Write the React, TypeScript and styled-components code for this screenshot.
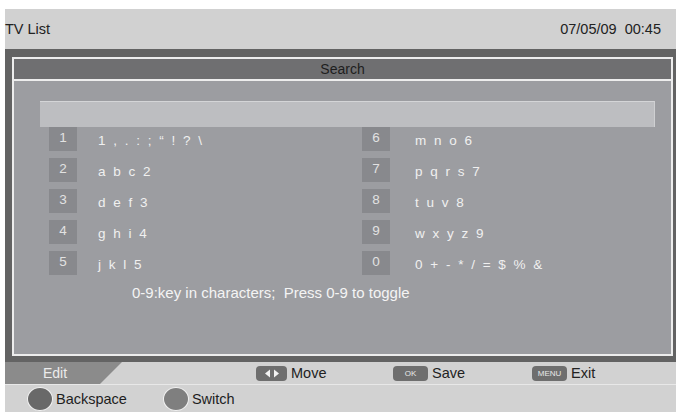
import * as React from "react";
import styled, { createGlobalStyle } from "styled-components";

type KeyGroup = {
  key: string;
  chars: string;
};

const leftKeys: Array<KeyGroup> = [
  { key: "1", chars: "1 , . : ; \u201C ! ? \\" },
  { key: "2", chars: "a b c 2" },
  { key: "3", chars: "d e f 3" },
  { key: "4", chars: "g h i 4" },
  { key: "5", chars: "j k l 5" },
];

const rightKeys: Array<KeyGroup> = [
  { key: "6", chars: "m n o 6" },
  { key: "7", chars: "p q r s 7" },
  { key: "8", chars: "t u v 8" },
  { key: "9", chars: "w x y z 9" },
  { key: "0", chars: "0 + - * / = $ % &" },
];

function MoveArrows() {
  return (
    <svg width="16" height="9" viewBox="0 0 16 9">
      <polygon points="6,0.5 6,8.5 1,4.5" fill="#f2f2f2" />
      <polygon points="10,0.5 10,8.5 15,4.5" fill="#f2f2f2" />
    </svg>
  );
}

function App() {
  const renderKeyRow = (indent: number) => (group: KeyGroup) => {
    return (
      <KeyRow key={group.key}>
        <KeyNumber>{group.key}</KeyNumber>
        <KeyChars $indent={indent}>{group.chars}</KeyChars>
      </KeyRow>
    );
  };

  return (
    <>
      <GlobalStyle />
      <Screen>
        <TopBar>
          <span>TV List</span>
          <span>07/05/09&nbsp;&nbsp;00:45</span>
        </TopBar>
        <Frame>
          <Panel>
            <PanelHeader>Search</PanelHeader>
            <PanelBody>
              <SearchInput />
              <KeyGrid>
                <KeyColumn>{leftKeys.map(renderKeyRow(21))}</KeyColumn>
                <KeyColumn>{rightKeys.map(renderKeyRow(25))}</KeyColumn>
              </KeyGrid>
              <HelpText>0-9:key in characters;&nbsp;&nbsp;Press 0-9 to toggle</HelpText>
            </PanelBody>
          </Panel>
        </Frame>
        <ActionBar>
          <EditTab>Edit</EditTab>
          <Hint>
            <KeyBadge $width={31}>
              <MoveArrows />
            </KeyBadge>
            Move
          </Hint>
          <Hint>
            <KeyBadge $width={35}>OK</KeyBadge>
            Save
          </Hint>
          <Hint>
            <KeyBadge $width={35}>MENU</KeyBadge>
            Exit
          </Hint>
        </ActionBar>
        <ColorBar>
          <ColorHint>
            <ColorDot $color="#696969" />
            Backspace
          </ColorHint>
          <ColorHint>
            <ColorDot $color="#7f7f7f" />
            Switch
          </ColorHint>
        </ColorBar>
      </Screen>
    </>
  );
}

export default App;

const GlobalStyle = createGlobalStyle`
  body {
    margin: 0;
    background: #ffffff;
    font-family: "Liberation Sans", Arial, sans-serif;
  }
`;

const Screen = styled.div`
  display: flex;
  flex-direction: column;
  width: 671px;
  margin: 9px 0 0 5px;
`;

const TopBar = styled.header`
  display: flex;
  flex-direction: row;
  justify-content: space-between;
  align-items: center;
  height: 40px;
  padding: 0 15px 1px 0;
  background-color: #d1d1d1;
  color: #222;
  font-size: 14.5px;
  box-sizing: border-box;
`;

const Frame = styled.div`
  display: flex;
  height: 313px;
  padding: 8px 3px 6px 7px;
  background-color: #636363;
  box-sizing: border-box;
`;

const Panel = styled.section`
  display: flex;
  flex-direction: column;
  flex: 1;
  border: 2px solid #ededed;
`;

const PanelHeader = styled.div`
  display: flex;
  justify-content: center;
  align-items: center;
  height: 20px;
  background-color: #6f6f71;
  border-bottom: 2px solid #ededed;
  color: #1e1e1e;
  font-size: 14px;
`;

const PanelBody = styled.div`
  display: flex;
  flex-direction: column;
  flex: 1;
  padding: 20px 16px 0 26px;
  background-color: #9c9da1;
`;

const SearchInput = styled.div`
  height: 26px;
  background-color: #bdbec1;
  border-top: 1px solid #d4d5d7;
  border-right: 1px solid #cfd0d2;
  box-sizing: border-box;
`;

const KeyGrid = styled.div`
  display: grid;
  grid-template-columns: 313px 1fr;
  padding-left: 9px;
`;

const KeyColumn = styled.div`
  display: flex;
  flex-direction: column;
`;

const KeyRow = styled.div`
  display: flex;
  flex-direction: row;
  align-items: flex-start;
  height: 31px;
`;

const KeyNumber = styled.div`
  width: 28px;
  height: 24px;
  padding-top: 3px;
  box-sizing: border-box;
  background-color: #88898d;
  color: #e2e2e2;
  font-size: 13.5px;
  text-align: center;
`;

const KeyChars = styled.div<{ $indent: number }>`
  margin: 6px 0 0 ${(props) => props.$indent}px;
  color: #f0f0f0;
  font-size: 13.5px;
  letter-spacing: 2px;
  white-space: pre;
`;

const HelpText = styled.p`
  margin: 2px 0 0 92px;
  color: #f4f4f4;
  font-size: 15px;
`;

const ActionBar = styled.div`
  display: grid;
  grid-template-columns: 251px 137px 139px 1fr;
  align-items: center;
  height: 22px;
  background-color: #d2d2d2;
  border-bottom: 1px solid #e8e8e8;
  box-sizing: content-box;
`;

const EditTab = styled.div`
  align-self: stretch;
  display: flex;
  align-items: center;
  width: 117px;
  padding-left: 38px;
  box-sizing: border-box;
  background-color: #8b8b8b;
  clip-path: polygon(0 0, 100% 0, 95px 100%, 0 100%);
  color: #ececec;
  font-size: 14px;
`;

const Hint = styled.div`
  display: flex;
  flex-direction: row;
  align-items: center;
  gap: 4px;
  color: #222;
  font-size: 14.5px;
`;

const KeyBadge = styled.span<{ $width: number }>`
  display: inline-flex;
  justify-content: center;
  align-items: center;
  width: ${(props) => props.$width}px;
  height: 15px;
  border-radius: 4px;
  background-color: #6e6e6e;
  color: #e8e8e8;
  font-size: 8px;
`;

const ColorBar = styled.div`
  display: flex;
  flex-direction: row;
  align-items: center;
  gap: 36px;
  height: 27px;
  padding-left: 22px;
  background-color: #d2d2d2;
`;

const ColorHint = styled.div`
  display: flex;
  flex-direction: row;
  align-items: center;
  gap: 3px;
  color: #1e1e1e;
  font-size: 14.5px;
`;

const ColorDot = styled.span<{ $color: string }>`
  width: 24px;
  height: 22px;
  border-radius: 50%;
  border: 1px solid #f2f2f2;
  background-color: ${(props) => props.$color};
`;
